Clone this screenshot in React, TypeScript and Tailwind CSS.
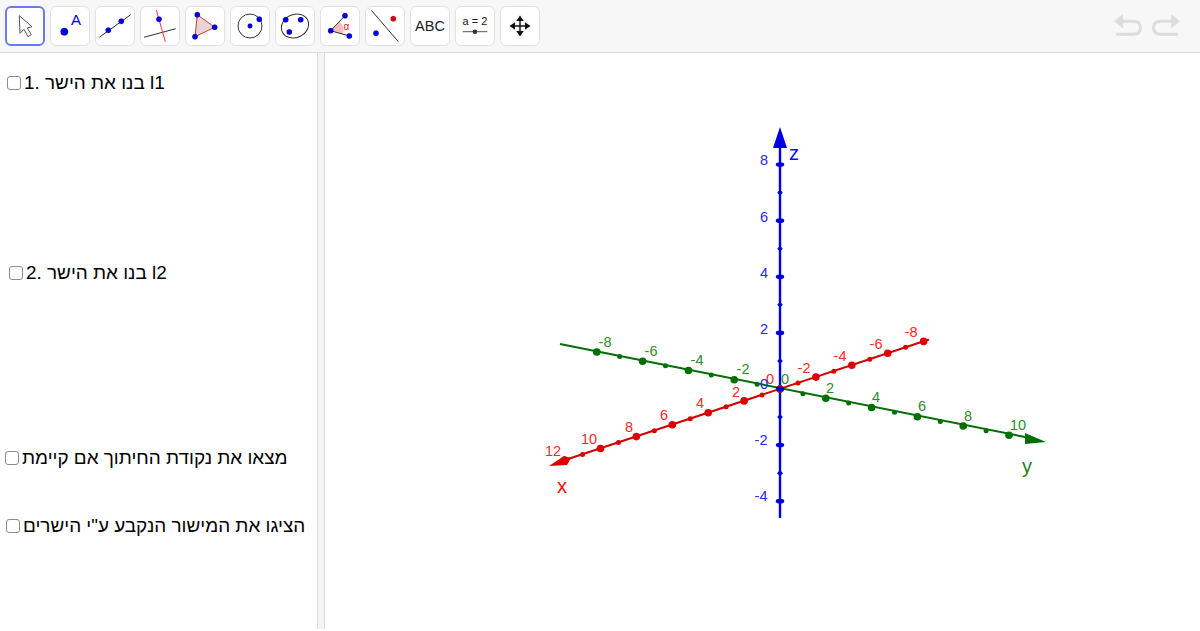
import React from "react";

const BLUE = "#0000e6";
const Dot = ({ x, y, r = 3.2, c = BLUE }: { x: number; y: number; r?: number; c?: string }) => (
  <circle cx={x} cy={y} r={r} fill={c} stroke="#00003a" strokeOpacity={0.3} strokeWidth={0.6} />
);

const icons: React.ReactNode[] = [
  <polygon key="m" points="14.3,9.7 15,27.3 19,23.3 23,30.7 26.3,28.7 22.3,22 27,20.7" fill="#fff" stroke="#555" strokeWidth={1} strokeLinejoin="round" />,
  <g key="p">
    <Dot x={14.3} y={25.7} r={3.8} />
    <text x={26} y={19} fontSize={15} fill="#0000e6" textAnchor="middle" fontFamily="Liberation Sans">A</text>
  </g>,
  <g key="l">
    <line x1={4.3} y1={31.3} x2={35.7} y2={8.7} stroke="#333" strokeWidth={1} />
    <Dot x={13.3} y={24.3} r={2.7} />
    <Dot x={26.3} y={15.3} r={2.7} />
  </g>,
  <g key="perp">
    <line x1={4} y1={31.3} x2={35.7} y2={22.7} stroke="#333" strokeWidth={1} />
    <line x1={16.3} y1={4} x2={25.3} y2={35.7} stroke="#f03a3a" strokeWidth={1} />
    <Dot x={19} y={13.3} r={2.7} />
  </g>,
  <g key="poly">
    <polygon points="12.3,8.7 29.7,21.3 10,30.7" fill="#ecd2d2" stroke="#c04040" strokeWidth={1} />
    <Dot x={12.3} y={8.7} r={2.7} />
    <Dot x={29.7} y={21.3} r={2.7} />
    <Dot x={10} y={30.7} r={2.7} />
  </g>,
  <g key="c">
    <circle cx={20} cy={20} r={12} fill="none" stroke="#333" strokeWidth={1} />
    <Dot x={20} y={20} r={2.4} />
    <Dot x={29.3} y={13.3} r={2.7} />
  </g>,
  <g key="e">
    <ellipse cx={20} cy={20} rx={14} ry={11.5} fill="none" stroke="#333" strokeWidth={1} transform="rotate(-25 20 20)" />
    <Dot x={10.7} y={13.7} r={2.7} />
    <Dot x={25.7} y={13.7} r={2.7} />
    <Dot x={14.3} y={26} r={2.7} />
  </g>,
  <g key="a">
    <path d="M10.7 24.7 L19.5 15.5 A13 13 0 0 1 23 28.5 Z" fill="#f8bcbc" />
    <line x1={10.7} y1={24.7} x2={25} y2={9.7} stroke="#333" strokeWidth={1} />
    <line x1={10.7} y1={24.7} x2={29.3} y2={30} stroke="#333" strokeWidth={1} />
    <text x={26.5} y={23.5} fontSize={10} fill="#e02020" textAnchor="middle" fontFamily="Liberation Sans">α</text>
    <Dot x={10.7} y={24.7} r={2.7} />
    <Dot x={25} y={9.7} r={2.7} />
    <Dot x={29.3} y={30} r={2.7} />
  </g>,
  <g key="par">
    <line x1={6.3} y1={4.3} x2={33.3} y2={35.7} stroke="#333" strokeWidth={1} />
    <Dot x={11} y={27.3} r={2.7} />
    <Dot x={28.3} y={12.7} r={2.7} c="#e00000" />
  </g>,
  <text key="abc" x={20} y={25} fontSize={14.5} fill="#222" textAnchor="middle" fontFamily="Liberation Sans">ABC</text>,
  <g key="s">
    <text x={20} y={19} fontSize={11} fill="#222" textAnchor="middle" fontFamily="Liberation Sans">a = 2</text>
    <line x1={7.7} y1={25.7} x2={32.3} y2={25.7} stroke="#555" strokeWidth={1} />
    <circle cx={20} cy={25.7} r={2.3} fill="#333" />
  </g>,
  <g key="mv" fill="#111" stroke="#111">
    <line x1={20} y1={12} x2={20} y2={28} strokeWidth={1.4} />
    <line x1={12} y1={20} x2={28} y2={20} strokeWidth={1.4} />
    <polygon points="20,9.5 16.3,15 23.7,15" strokeWidth={0} />
    <polygon points="20,30.5 16.3,25 23.7,25" strokeWidth={0} />
    <polygon points="9.5,20 15,16.3 15,23.7" strokeWidth={0} />
    <polygon points="30.5,20 25,16.3 25,23.7" strokeWidth={0} />
  </g>,
];

const F = "Liberation Sans";

function lerpTicks(ox: number, oy: number, dx: number, dy: number, from: number, to: number) {
  const out: { x: number; y: number; major: boolean }[] = [];
  for (let i = from; i <= to; i++) {
    out.push({ x: ox + dx * i, y: oy + dy * i, major: i % 2 === 0 });
  }
  return out;
}

const xLabels: [string, number, number][] = [
  ["12", 553, 456], ["10", 589, 444], ["8", 629, 432], ["6", 664, 420], ["4", 700, 408], ["2", 736, 397],
  ["-2", 804, 373], ["-4", 840, 361], ["-6", 876, 349], ["-8", 911, 337], ["0", 770, 384],
];
const yLabels: [string, number, number][] = [
  ["-8", 605, 347], ["-6", 651, 356], ["-4", 697, 365], ["-2", 743, 374], ["0", 785, 384], ["2", 830, 393],
  ["4", 876, 402], ["6", 922, 411], ["8", 968, 421], ["10", 1018, 430],
];
const zLabels: [string, number, number][] = [
  ["8", 764, 165], ["6", 764, 222], ["4", 764, 278], ["2", 764, 334], ["0", 764, 389], ["-2", 761, 445], ["-4", 761, 501],
];

function Graph() {
  const xT = lerpTicks(780, 389, -17.95, 5.95, -8, 12);
  const yT = lerpTicks(780, 389, 22.9, 4.63, -8, 10);
  const zT = lerpTicks(780, 389, 0, -28.05, -4, 8);
  return (
    <svg className="block w-full h-full" viewBox="325 53 875 578">
      <line x1={560} y1={344} x2={1030} y2={438} stroke="#006e00" strokeWidth={2} />
      <line x1={929} y1={339.5} x2={565} y2={460} stroke="#d00000" strokeWidth={2} />
      <line x1={780} y1={145} x2={780} y2={518} stroke="#0000e0" strokeWidth={2.4} />
      {yT.map((t, i) => (
        <circle key={i} cx={t.x} cy={t.y} r={t.major ? 3.8 : 2.5} fill="#006e00" />
      ))}
      {xT.map((t, i) => (
        <circle key={i} cx={t.x} cy={t.y} r={t.major ? 3.8 : 2.5} fill="#dc0000" />
      ))}
      {zT.map((t, i) => (
        <ellipse key={i} cx={t.x} cy={t.y} rx={t.major ? 4.2 : 2.6} ry={t.major ? 2.4 : 1.8} fill="#0000dc" />
      ))}
      <polygon points="780,127 773,148 787,148" fill="#0000e0" />
      <polygon points="1046,442 1025,433 1025,444" fill="#006e00" />
      <polygon points="549,466 564,456 571,458 567,465" fill="#dc0000" />
      <g fontFamily={F} fontSize={14.5} textAnchor="middle">
        {xLabels.map(([s, x, y]) => (
          <text key={s} x={x} y={y} fill="#ff2828">{s}</text>
        ))}
        {yLabels.map(([s, x, y]) => (
          <text key={s} x={x} y={y} fill="#2e8b2e">{s}</text>
        ))}
        {zLabels.map(([s, x, y]) => (
          <text key={s} x={x} y={y} fill="#2828ff">{s}</text>
        ))}
      </g>
      <g fontFamily={F} fontSize={20} textAnchor="middle">
        <text x={794} y={160} fill="#1010f0">z</text>
        <text x={562} y={493} fill="#f01010">x</text>
        <text x={1027} y={473} fill="#1e7f1e">y</text>
      </g>
    </svg>
  );
}

const Row = ({ className, text }: { className: string; text: string }) => (
  <label className={`flex items-center gap-[3px] h-[20px] ${className}`}>
    <span className="w-[14px] h-[14px] shrink-0 rounded-[3px] border-[1.5px] border-[#8c8c8c] bg-white box-border" />
    <span dir="rtl" className="text-[18.9px] leading-[20px] text-black whitespace-nowrap">{text}</span>
  </label>
);

export default function App() {
  return (
    <div className="w-[1200px] h-[631px] flex flex-col bg-white overflow-hidden font-['Liberation_Sans',sans-serif]">
      <div className="h-[53px] shrink-0 flex items-start justify-between bg-[#f7f7f7] border-b border-[#dcdcdc] pl-[5px] pt-[6px] pr-[20px]">
        <div className="flex gap-[5px]">
          {icons.map((ic, i) => (
            <div
              key={i}
              className={
                i === 0
                  ? "w-[40px] h-[40px] rounded-[6px] bg-white border-2 border-[#6b79f5] box-border overflow-hidden"
                  : "w-[40px] h-[40px] rounded-[6px] bg-white border border-[#e2e2e2] box-border overflow-hidden"
              }
            >
              <svg viewBox="0 0 40 40" className={i === 0 ? "w-[40px] h-[40px] -m-[2px] block" : "w-[40px] h-[40px] -m-[1px] block"}>
                {ic}
              </svg>
            </div>
          ))}
        </div>
        <div className="flex gap-[8px] mt-[6px]">
          <svg width="29" height="24" viewBox="0 0 29 24" fill="none">
            <path d="M8 9.3 H19 C24 9.3 26.5 12 26.5 16 C26.5 20 24 22.3 19 22.3 H2" stroke="#dcdcdc" strokeWidth="3" />
            <polygon points="0,9.3 9,2 9,16.5" fill="#dcdcdc" />
          </svg>
          <svg width="29" height="24" viewBox="0 0 29 24" fill="none">
            <path d="M21 9.3 H10 C5 9.3 2.5 12 2.5 16 C2.5 20 5 22.3 10 22.3 H27" stroke="#dcdcdc" strokeWidth="3" />
            <polygon points="29,9.3 20,2 20,16.5" fill="#dcdcdc" />
          </svg>
        </div>
      </div>
      <div className="flex-1 flex min-h-0">
        <div className="w-[317px] shrink-0 flex flex-col items-start">
          <Row className="ml-[7px] mt-[20px]" text="l1 בנו את הישר .1" />
          <Row className="ml-[9px] mt-[170px]" text="l2 בנו את הישר .2" />
          <Row className="ml-[5px] mt-[165px]" text="מצאו את נקודת החיתוך אם קיימת" />
          <Row className="ml-[6px] mt-[48px]" text={'הציגו את המישור הנקבע ע"י הישרים'} />
        </div>
        <div className="w-[8px] h-[576px] shrink-0 bg-[#f5f5f5] border-x border-[#dcdcdc]" />
        <div className="flex-1 min-w-0">
          <Graph />
        </div>
      </div>
    </div>
  );
}
